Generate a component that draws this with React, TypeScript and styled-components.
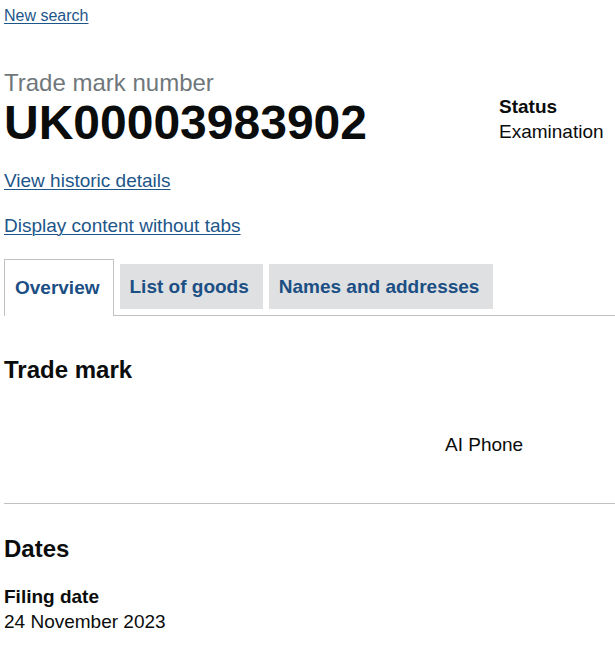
import styled, { createGlobalStyle } from 'styled-components';

const GlobalStyle = createGlobalStyle`
    body {
      margin: 0;
      background: #fff;
      color: #0b0c0c;
      font-family: "Liberation Sans", Arial, sans-serif;
    }
`;

const Page = styled.div`
    width: 615px;
    padding: 6px 0 0 4px;
    box-sizing: border-box;
`;

const Link = styled.a<{ $size?: number }>`
    display: inline-block;
    color: #1d5689;
    font-size: ${(p) => p.$size ?? 19}px;
    line-height: ${(p) => ((p.$size ?? 19) === 16 ? 20 : 25)}px;
    text-decoration: underline;
    text-underline-offset: 2px;
    text-decoration-thickness: 1px;
    cursor: pointer;
`;

const LinkRow = styled.div<{ $top: number }>`
    margin-top: ${(p) => p.$top}px;
`;

const Header = styled.div`
    display: flex;
    align-items: flex-start;
    margin-top: 42px;
`;

const TitleBlock = styled.div`
    flex: 1;
`;

const Caption = styled.span`
    display: block;
    color: #6f777b;
    font-size: 24px;
    line-height: 30px;
`;

const Title = styled.h1`
    margin: 0;
    font-size: 48px;
    line-height: 50px;
    font-weight: 700;
`;

const StatusBlock = styled.dl`
    width: 116px;
    margin: 26px 0 0;
    font-size: 19px;
    line-height: 25px;

    > dt {
      font-weight: 700;
    }

    > dd {
      margin: 0;
    }
`;

const TabList = styled.ul`
    display: flex;
    align-items: flex-start;
    list-style: none;
    margin: 21px 0 0;
    padding: 0;
    border-bottom: 1px solid #bfc1c3;
`;

const Tab = styled.li<{ $selected?: boolean }>`
    margin-right: 6px;
    font-size: 19px;
    line-height: 25px;
    font-weight: 700;
    background: ${(p) => (p.$selected ? '#fff' : '#dee0e2')};
    border: ${(p) => (p.$selected ? '1px solid #bfc1c3' : '0')};
    border-bottom: 0;
    padding: ${(p) => (p.$selected ? '15px 13px 16px 10px' : '10px 14px 10px 10px')};
    margin-top: ${(p) => (p.$selected ? '0' : '5px')};
    margin-bottom: ${(p) => (p.$selected ? '-1px' : '0')};

    > a {
      color: #1b4f84;
      text-decoration: none;
    }
`;

const Section = styled.section<{ $rule?: boolean }>`
    border-bottom: ${(p) => (p.$rule ? '1px solid #bfc1c3' : '0')};
`;

const Heading = styled.h2<{ $top: number }>`
    margin: ${(p) => p.$top}px 0 0;
    font-size: 24px;
    line-height: 30px;
    font-weight: 700;
`;

const MarkGrid = styled.div`
    display: grid;
    grid-template-columns: 441px 1fr;
    margin-top: 47px;
    padding-bottom: 46px;
    font-size: 19px;
    line-height: 25px;
`;

const Field = styled.dl`
    margin: 20px 0 0;
    font-size: 19px;
    line-height: 25px;

    > dt {
      font-weight: 700;
    }

    > dd {
      margin: 0;
    }
`;

export default function App() {
    const tabs = ['Overview', 'List of goods', 'Names and addresses'];

    return (
        <Page>
            <GlobalStyle />
            <Link $size={16}>New search</Link>

            <Header>
                <TitleBlock>
                    <Caption>Trade mark number</Caption>
                    <Title>UK00003983902</Title>
                </TitleBlock>
                <StatusBlock>
                    <dt>Status</dt>
                    <dd>Examination</dd>
                </StatusBlock>
            </Header>

            <LinkRow $top={20}>
                <Link>View historic details</Link>
            </LinkRow>
            <LinkRow $top={20}>
                <Link>Display content without tabs</Link>
            </LinkRow>

            <TabList>
                {tabs.map((tab, index) => (
                    <Tab key={tab} $selected={index === 0}>
                        <a>{tab}</a>
                    </Tab>
                ))}
            </TabList>

            <Section $rule>
                <Heading $top={39}>Trade mark</Heading>
                <MarkGrid>
                    <div />
                    <div>AI Phone</div>
                </MarkGrid>
            </Section>

            <Section>
                <Heading $top={30}>Dates</Heading>
                <Field>
                    <dt>Filing date</dt>
                    <dd>24 November 2023</dd>
                </Field>
            </Section>
        </Page>
    );
}
